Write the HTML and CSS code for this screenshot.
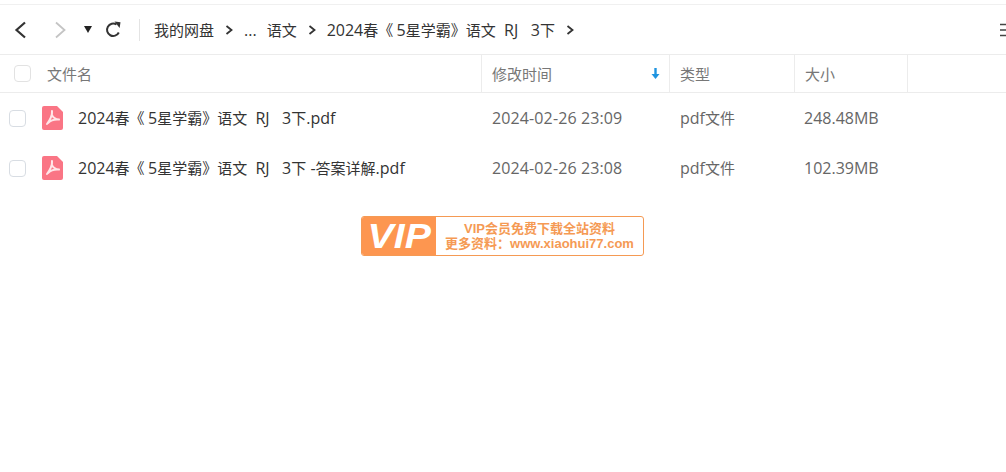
FILE: index.html
```html
<!DOCTYPE html>
<html lang="zh-CN">
<head>
<meta charset="utf-8">
<title>我的网盘</title>
<link rel="stylesheet" href="styles.css">
</head>
<body>
<div class="page">
  <nav class="toolbar">
    <div class="nav-buttons">
      <svg class="ic back" width="14" height="20" viewBox="0 0 14 20"><path d="M12 2.500 3.500 10l8.500 7.500" fill="none" stroke="#333" stroke-width="2.200"/></svg>
      <svg class="ic forward" width="14" height="20" viewBox="0 0 14 20"><path d="M2 2.500 10.500 10 2 17.500" fill="none" stroke="#c4c4c4" stroke-width="1.800"/></svg>
      <svg class="ic caret" width="8" height="7" viewBox="0 0 8 7"><path d="M0 0h8L4 7z" fill="#222"/></svg>
      <svg class="ic refresh" width="17" height="17" viewBox="0 0 17 17"><path d="M13.800 11.500A6.200 6.200 0 1 1 11.500 3.500" fill="none" stroke="#333" stroke-width="2"/><path d="M9.500 0.500 15.500 1.200 14.600 7z" fill="#333"/></svg>
    </div>
    <div class="crumbs">
      <span>我的网盘</span>
      <svg class="sep" width="8" height="10" viewBox="0 0 8 10"><path d="M1.500 1l5 4-5 4" fill="none" stroke="#333" stroke-width="1.800"/></svg>
      <span class="dots lat">...</span>
      <span>语文</span>
      <svg class="sep" width="8" height="10" viewBox="0 0 8 10"><path d="M1.500 1l5 4-5 4" fill="none" stroke="#333" stroke-width="1.800"/></svg>
      <span class="pre"><span class="lat">2024</span>春《 <span class="lat">5</span>星学霸》语文<span class="lat">&nbsp;&nbsp;RJ&nbsp;&nbsp;&nbsp;3</span>下</span>
      <svg class="sep" width="8" height="10" viewBox="0 0 8 10"><path d="M1.500 1l5 4-5 4" fill="none" stroke="#333" stroke-width="1.800"/></svg>
    </div>
    <div class="view-toggle">
      <svg width="6" height="14" viewBox="0 0 6 14"><path d="M0 1.500h6M0 7h6M0 12.500h6" stroke="#444" stroke-width="1.600"/></svg>
    </div>
  </nav>

  <div class="grid-row head">
    <div class="cell c-name"><span class="check head-check"></span><span class="head-label">文件名</span></div>
    <div class="cell c-time"><span>修改时间</span>
      <svg class="sort" width="9" height="12" viewBox="0 0 9 12"><path d="M4.500 0v7" stroke="#1f94e0" stroke-width="2.400"/><path d="M0.500 6h8L4.500 11z" fill="#1f94e0"/></svg>
    </div>
    <div class="cell c-type">类型</div>
    <div class="cell c-size">大小</div>
    <div class="cell c-rest"></div>
  </div>

  <div class="grid-row file">
    <div class="cell c-name">
      <span class="check"></span>
      <svg class="pdf" width="21" height="24" viewBox="0 0 21 24"><path d="M2 0h13l6 6v16a2 2 0 0 1-2 2H2a2 2 0 0 1-2-2V2a2 2 0 0 1 2-2z" fill="#fa7585"/><path d="M10 5c.5 4-2 9-5 13M10 9c1 2.500 3.500 4 7 4.500M6 17c2.500-2.500 6-4 11-3.500" fill="none" stroke="#ffe6e9" stroke-width="2" stroke-linecap="round"/></svg>
      <span class="fname"><span class="lat">2024</span>春《 <span class="lat">5</span>星学霸》语文<span class="lat">&nbsp;&nbsp;RJ&nbsp;&nbsp;&nbsp;3</span>下<span class="lat">.pdf</span></span>
    </div>
    <div class="cell c-time"><span class="lat stamp">2024-02-26 23:09</span></div>
    <div class="cell c-type"><span><span class="lat">pdf</span>文件</span></div>
    <div class="cell c-size"><span class="lat">248.48MB</span></div>
  </div>

  <div class="grid-row file">
    <div class="cell c-name">
      <span class="check"></span>
      <svg class="pdf" width="21" height="24" viewBox="0 0 21 24"><path d="M2 0h13l6 6v16a2 2 0 0 1-2 2H2a2 2 0 0 1-2-2V2a2 2 0 0 1 2-2z" fill="#fa7585"/><path d="M10 5c.5 4-2 9-5 13M10 9c1 2.500 3.500 4 7 4.500M6 17c2.500-2.500 6-4 11-3.500" fill="none" stroke="#ffe6e9" stroke-width="2" stroke-linecap="round"/></svg>
      <span class="fname"><span class="lat">2024</span>春《 <span class="lat">5</span>星学霸》语文<span class="lat">&nbsp;&nbsp;RJ&nbsp;&nbsp;&nbsp;3</span>下<span class="lat">&nbsp;-</span>答案详解<span class="lat">.pdf</span></span>
    </div>
    <div class="cell c-time"><span class="lat stamp">2024-02-26 23:08</span></div>
    <div class="cell c-type"><span><span class="lat">pdf</span>文件</span></div>
    <div class="cell c-size"><span class="lat">102.39MB</span></div>
  </div>

  <div class="banner">
    <div class="vip"><span class="vip-text">VIP</span></div>
    <div class="promo">
      <div>VIP会员免费下载全站资料</div>
      <div>更多资料：www.xiaohui77.com</div>
    </div>
  </div>
</div>
</body>
</html>
```

FILE: styles.css
```css
* { box-sizing: border-box; }
html, body { margin: 0; padding: 0; background: #fff; overflow: hidden; }
body {
  width: 1006px;
  height: 472px;
  font-family: "Noto Sans CJK SC", sans-serif;
  font-size: 15px;
  color: #333;
}
.lat { font-family: "Open Sans", sans-serif; font-size: 16px; }
.stamp { letter-spacing: 0.12px; }
.page { padding-top: 4px; }
.toolbar {
  height: 51px;
  display: flex;
  align-items: center;
  border-top: 1px solid #f0f0f0;
  border-bottom: 1px solid #ececec;
}
.nav-buttons {
  width: 140px;
  height: 22px;
  flex: none;
  display: flex;
  align-items: center;
  border-right: 1px solid #e4e4e4;
}
.ic { display: block; flex: none; }
.back { margin-left: 13px; }
.forward { margin-left: 27px; }
.caret { margin-left: 16px; }
.refresh { margin-left: 13px; }
.crumbs {
  flex: 1;
  display: flex;
  align-items: center;
  padding-left: 14px;
  color: #333;
  white-space: nowrap;
}
.sep { margin: 0 11px; }
.dots { margin-right: 10px; }
.view-toggle { width: 6px; flex: none; display: flex; }
.grid-row { display: flex; align-items: stretch; }
.head { height: 38px; border-bottom: 1px solid #ececec; color: #777; }
.file { height: 50px; }
.cell { display: flex; align-items: center; flex: none; white-space: nowrap; }
.c-name { width: 481px; padding-left: 9px; }
.c-time { width: 188px; padding-left: 11px; color: #666; }
.c-type { width: 125px; padding-left: 11px; color: #666; }
.c-size { width: 114px; padding-left: 10px; color: #666; }
.c-rest { flex: 1; }
.head .c-time { border-left: 1px solid #ececec; color: #777; justify-content: space-between; padding-left: 10px; padding-right: 9px; }
.head .c-type { border-left: 1px solid #ececec; color: #777; padding-left: 10px; }
.head .c-size { border-left: 1px solid #ececec; border-right: 1px solid #ececec; color: #777; padding-left: 10px; }
.check {
  width: 17px;
  height: 17px;
  flex: none;
  border: 1px solid #d8dde3;
  border-radius: 4px;
  background: #fff;
}
.head-check { margin-left: 5px; border-color: #e2e2e2; }
.head-label { margin-left: 16px; }
.pdf { margin-left: 16px; flex: none; }
.fname { margin-left: 15px; color: #333; }
.banner {
  margin: 23px 0 0 361px;
  width: 283px;
  height: 40px;
  display: flex;
  border: 1px solid #f59a54;
  border-radius: 3px;
  overflow: hidden;
}
.vip {
  width: 74px;
  flex: none;
  background: #fd9650;
  display: flex;
  align-items: center;
  justify-content: center;
}
.vip-text {
  color: #fff;
  font-family: "Liberation Sans", sans-serif;
  font-weight: 700;
  font-style: italic;
  font-size: 35px;
  line-height: 38px;
  transform: scaleX(1.12);
}
.promo {
  flex: 1;
  display: flex;
  flex-direction: column;
  align-items: center;
  justify-content: center;
  color: #f59a54;
  font-family: "Liberation Sans", "Noto Sans CJK SC", sans-serif;
  font-size: 13px;
  font-weight: 700;
  line-height: 15px;
}
```
